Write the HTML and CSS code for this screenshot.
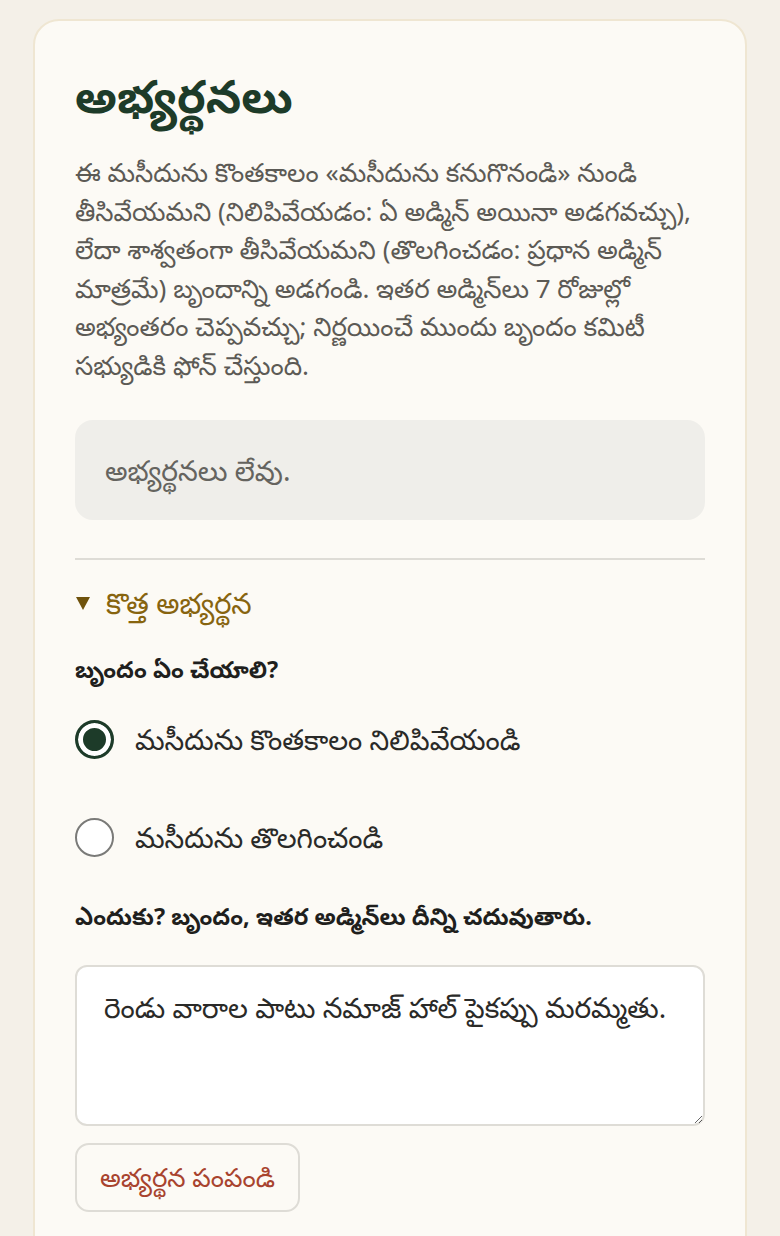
FILE: index.html
```html
<!DOCTYPE html>
<html lang="te">
<head>
<meta charset="utf-8">
<title>అభ్యర్థనలు</title>
<link rel="stylesheet" href="styles.css">
</head>
<body>
<main class="card">
  <h1 class="title">అభ్యర్థనలు</h1>
  <p class="intro">ఈ మసీదును కొంతకాలం «మసీదును కనుగొనండి» నుండి తీసివేయమని (నిలిపివేయడం: ఏ అడ్మిన్ అయినా అడగవచ్చు), లేదా శాశ్వతంగా తీసివేయమని (తొలగించడం: ప్రధాన అడ్మిన్ మాత్రమే) బృందాన్ని అడగండి. ఇతర అడ్మిన్‌లు 7 రోజుల్లో అభ్యంతరం చెప్పవచ్చు; నిర్ణయించే ముందు బృందం కమిటీ సభ్యుడికి ఫోన్ చేస్తుంది.</p>
  <div class="empty">అభ్యర్థనలు లేవు.</div>
  <hr class="divider">
  <details class="new" open>
    <summary class="new-summary">కొత్త అభ్యర్థన</summary>
    <form class="form">
      <p class="label">బృందం ఏం చేయాలి?</p>
      <label class="option"><input type="radio" name="action" class="radio" checked><span>మసీదును కొంతకాలం నిలిపివేయండి</span></label>
      <label class="option"><input type="radio" name="action" class="radio"><span>మసీదును తొలగించండి</span></label>
      <label class="label" for="reason">ఎందుకు? బృందం, ఇతర అడ్మిన్‌లు దీన్ని చదువుతారు.</label>
      <textarea id="reason" class="reason">రెండు వారాల పాటు నమాజ్ హాల్ పైకప్పు మరమ్మతు.</textarea>
      <div class="actions"><button type="button" class="submit">అభ్యర్థన పంపండి</button></div>
    </form>
  </details>
</main>
</body>
</html>
```
FILE: styles.css
```css
html, body {
  margin: 0;
  padding: 0;
}
body {
  background: #f4f0e8;
  font-family: "Noto Sans", "Noto Sans Telugu", sans-serif;
  color: #2a2a28;
}
.card {
  margin: 19px 33px 0 33px;
  background: #fcfaf5;
  border: 2px solid #efe6d2;
  border-radius: 26px;
  padding: 44px 40px 80px 40px;
}
.title {
  margin: 0;
  font-size: 46px;
  line-height: 60px;
  font-weight: 700;
  color: #1d3b29;
}
.intro {
  margin: 28px 0 0 0;
  font-size: 26px;
  line-height: 38.5px;
  color: #5c5a55;
}
.empty {
  margin-top: 36px;
  background: #efeeea;
  border-radius: 18px;
  padding: 30px 30px;
  font-size: 28.2px;
  line-height: 40px;
  color: #65645f;
}
.divider {
  margin: 38px 0 0 0;
  height: 0;
  border: 0;
  border-top: 2px solid #dedcd6;
}
.new {
  margin-top: 23px;
}
.new-summary {
  display: flex;
  align-items: center;
  gap: 16px;
  list-style: none;
  font-size: 29px;
  line-height: 40px;
  color: #87640f;
  cursor: pointer;
}
.new-summary::-webkit-details-marker {
  display: none;
}
.new-summary::before {
  content: "";
  width: 0;
  height: 0;
  border-left: 7px solid transparent;
  border-right: 7px solid transparent;
  border-top: 13px solid #6f520c;
  margin-left: 1px;
}
.form {
  display: flex;
  flex-direction: column;
  margin-top: 29px;
}
.label {
  margin: 0;
  font-size: 23.4px;
  line-height: 34px;
  font-weight: 700;
  color: #1f1f1d;
}
.option {
  display: flex;
  align-items: center;
  gap: 21px;
  font-size: 28px;
  line-height: 40px;
  color: #2a2a28;
  margin-top: 33px;
}
.option + .option {
  margin-top: 58px;
}
.radio {
  appearance: none;
  -webkit-appearance: none;
  margin: 0;
  width: 39px;
  height: 39px;
  box-sizing: border-box;
  border-radius: 50%;
  border: 2px solid #7a7a78;
  background: #fff;
  flex: none;
}
.radio:checked {
  border: 3px solid #1d3b29;
  background: #1d3b29;
  box-shadow: inset 0 0 0 5px #fff;
}
.option + .label {
  margin-top: 42px;
}
.reason {
  margin-top: 32px;
  height: 161px;
  box-sizing: border-box;
  border: 2px solid #dedcd6;
  border-radius: 12px;
  background: #fff;
  padding: 20px 27px;
  font-family: inherit;
  font-size: 28px;
  line-height: 40px;
  color: #2a2a28;
  resize: vertical;
}
.actions {
  margin-top: 17px;
}
.submit {
  background: #fcfaf5;
  border: 2px solid #dedcd6;
  border-radius: 14px;
  padding: 15px 23px;
  font-family: inherit;
  font-size: 26px;
  line-height: 35px;
  color: #a8432e;
  cursor: pointer;
}
```
